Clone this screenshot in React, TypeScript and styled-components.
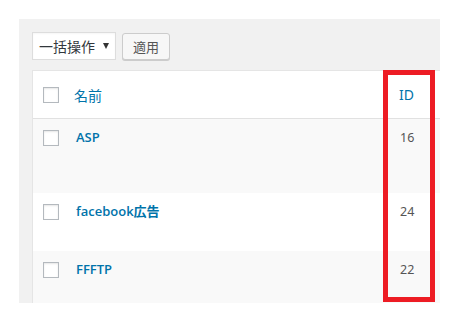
import React from 'react';
import styled, { createGlobalStyle } from 'styled-components';

const GlobalStyle = createGlobalStyle`
  body {
    margin: 0;
    background: #ffffff;
    font-family: "Open Sans", "Noto Sans", "Noto Sans CJK JP", sans-serif;
    color: #444444;
  }
`;

const Panel = styled.div`
  margin: 19px 0 0 19px;
  width: 421px;
  height: 284px;
  padding: 13px 0 0 13px;
  box-sizing: border-box;
  background: #f1f1f1;
  overflow: hidden;
`;

const Toolbar = styled.div`
  display: flex;
  align-items: center;
  gap: 6px;
  height: 28px;
  margin-bottom: 10px;
`;

const Select = styled.div`
  display: flex;
  align-items: center;
  gap: 8px;
  height: 28px;
  width: 84px;
  padding: 0 0 0 6px;
  box-sizing: border-box;
  white-space: nowrap;
  background: #ffffff;
  border: 1px solid #dddddd;
  box-shadow: inset 0 1px 2px rgba(0, 0, 0, 0.04);
  font-family: "Noto Sans CJK JP", sans-serif;
  font-size: 14px;
  color: #32373c;
`;

const Caret = styled.span`
  width: 0;
  height: 0;
  border-left: 3px solid transparent;
  border-right: 3px solid transparent;
  border-top: 6px solid #333333;
`;

const Button = styled.div`
  display: flex;
  align-items: center;
  justify-content: center;
  height: 27px;
  width: 48px;
  box-sizing: border-box;
  background: #f7f7f7;
  border: 1px solid #cccccc;
  border-radius: 3px;
  box-shadow: 0 1px 0 #cccccc;
  font-family: "Noto Sans CJK JP", sans-serif;
  font-size: 13px;
  color: #555555;
`;

const Table = styled.div`
  position: relative;
  width: 408px;
  background: #ffffff;
  border-left: 1px solid #e5e5e5;
  border-top: 1px solid #e5e5e5;
  box-sizing: border-box;
`;

const Row = styled.div<{ $height: number; $striped?: boolean; $head?: boolean }>`
  display: grid;
  grid-template-columns: 31px 1fr 50px;
  align-items: ${p => (p.$head ? 'center' : 'start')};
  height: ${p => p.$height}px;
  box-sizing: border-box;
  padding-top: ${p => (p.$head ? 0 : 11)}px;
  background: ${p => (p.$striped ? '#f9f9f9' : '#ffffff')};
  border-bottom: ${p => (p.$head ? '1px solid #e1e1e1' : 'none')};
`;

const CheckCell = styled.div`
  padding-left: 10px;
  display: flex;
`;

const Checkbox = styled.span`
  width: 16px;
  height: 16px;
  box-sizing: border-box;
  border: 1px solid #b4b9be;
  background: #ffffff;
  box-shadow: inset 0 1px 2px rgba(0, 0, 0, 0.1);
`;

const HeadLabel = styled.div<{ $pad: number }>`
  padding-left: ${p => p.$pad}px;
  font-family: "Noto Sans", "Noto Sans CJK JP", sans-serif;
  font-size: 14px;
  color: #0073aa;
`;

const Title = styled.a`
  padding-left: 12px;
  font-family: "Open Sans", "Noto Sans CJK JP", sans-serif;
  font-weight: 600;
  font-size: 13px;
  line-height: 15px;
  color: #0073aa;
  text-decoration: none;
`;

const IdCell = styled.div`
  padding-left: 10px;
  font-family: "Noto Sans", sans-serif;
  font-size: 12.5px;
  line-height: 16px;
  color: #555555;
`;

const Highlight = styled.div`
  position: absolute;
  left: 350px;
  top: -1px;
  width: 52px;
  height: 232px;
  box-sizing: border-box;
  border: 5px solid #ed1c24;
  pointer-events: none;
`;

const rows = [
  { title: 'ASP', id: 16, height: 74, striped: true },
  { title: 'facebook広告', id: 24, height: 58, striped: false },
  { title: 'FFFTP', id: 22, height: 60, striped: true },
];

const App = () => (
  <>
    <GlobalStyle />
    <Panel>
      <Toolbar>
        <Select>
          一括操作<Caret />
        </Select>
        <Button>適用</Button>
      </Toolbar>
      <Table>
        <Row $height={48} $head>
          <CheckCell><Checkbox /></CheckCell>
          <HeadLabel $pad={10}>名前</HeadLabel>
          <HeadLabel $pad={9}>ID</HeadLabel>
        </Row>
        {rows.map(row => (
          <Row key={row.id} $height={row.height} $striped={row.striped}>
            <CheckCell><Checkbox /></CheckCell>
            <Title href="#">{row.title}</Title>
            <IdCell>{row.id}</IdCell>
          </Row>
        ))}
        <Highlight />
      </Table>
    </Panel>
  </>
);

export default App;
